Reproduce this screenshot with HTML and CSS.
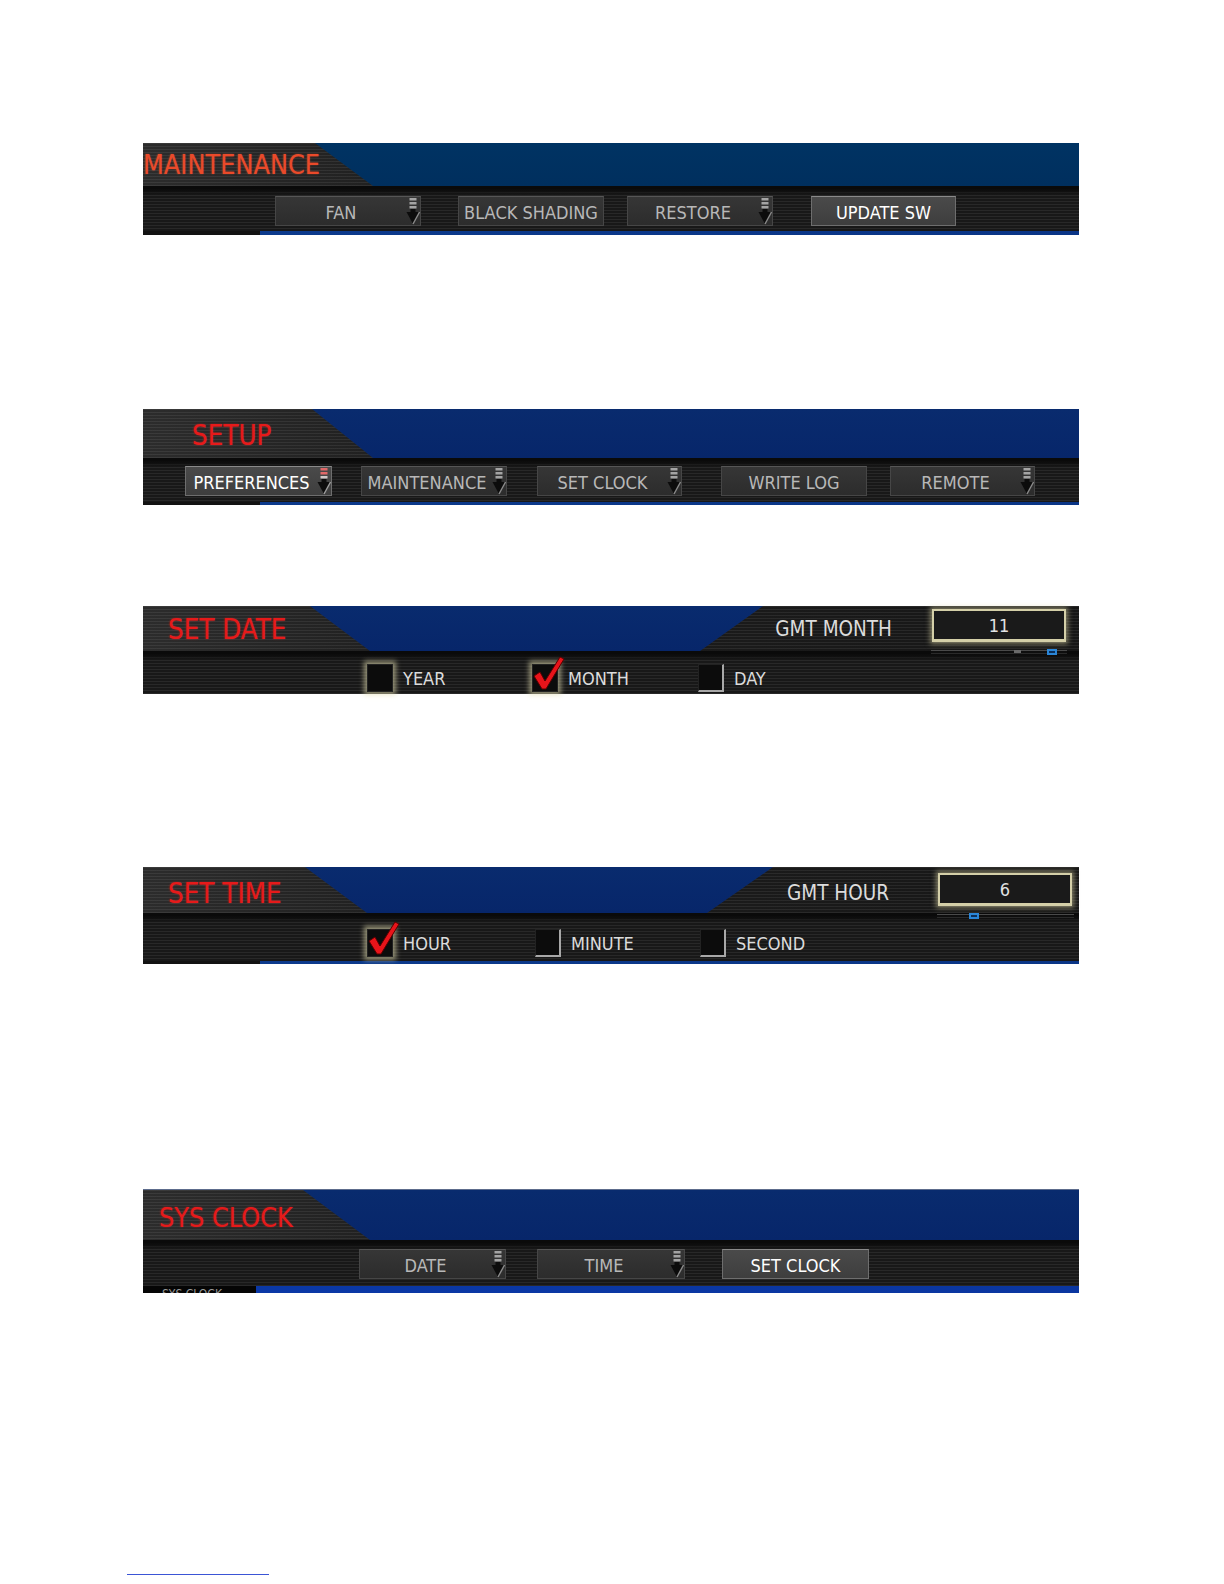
FILE: index.html
```html
<!DOCTYPE html>
<html lang="en">
<head>
<meta charset="utf-8">
<title>Camera menu panels</title>
<link rel="stylesheet" href="styles.css">
</head>
<body>
<main class="page">

  <section class="panel p1">
    <div class="head">
      <div class="title t-orange">MAINTENANCE</div>
    </div>
    <div class="bar">
      <div class="btn g1-a"><span class="lbl">FAN</span><svg class="ind" viewBox="0 0 14 28" width="14" height="28"><rect x="3.5" y="1" width="7" height="2.5" fill="#a4a4a4"/><rect x="3.5" y="5" width="7" height="2.5" fill="#a4a4a4"/><rect x="3.5" y="9" width="7" height="2.5" fill="#a4a4a4"/><rect x="4.5" y="12" width="5" height="3" fill="#0c0c0c"/><path d="M0.5 15 L13.5 15 L7 27 Z" fill="#0c0c0c"/><path d="M13.5 15 L7 27" stroke="#8c8c8c" stroke-width="1.4"/></svg></div>
      <div class="btn g1-b"><span class="lbl">BLACK SHADING</span></div>
      <div class="btn g1-c"><span class="lbl">RESTORE</span><svg class="ind" viewBox="0 0 14 28" width="14" height="28"><rect x="3.5" y="1" width="7" height="2.5" fill="#a4a4a4"/><rect x="3.5" y="5" width="7" height="2.5" fill="#a4a4a4"/><rect x="3.5" y="9" width="7" height="2.5" fill="#a4a4a4"/><rect x="4.5" y="12" width="5" height="3" fill="#0c0c0c"/><path d="M0.5 15 L13.5 15 L7 27 Z" fill="#0c0c0c"/><path d="M13.5 15 L7 27" stroke="#8c8c8c" stroke-width="1.4"/></svg></div>
      <div class="btn sel g1-d"><span class="lbl">UPDATE SW</span></div>
    </div>
    <div class="foot foot-blue"></div>
  </section>

  <section class="panel p2">
    <div class="head">
      <div class="title">SETUP</div>
    </div>
    <div class="bar">
      <div class="btn sel g2-a"><span class="lbl">PREFERENCES</span><svg class="ind" viewBox="0 0 14 28" width="14" height="28"><rect x="3.5" y="1" width="7" height="2.5" fill="#e06868"/><rect x="3.5" y="5" width="7" height="2.5" fill="#e06868"/><rect x="3.5" y="9" width="7" height="2.5" fill="#d0c8c8"/><rect x="4.5" y="12" width="5" height="3" fill="#0c0c0c"/><path d="M0.5 15 L13.5 15 L7 27 Z" fill="#0c0c0c"/><path d="M13.5 15 L7 27" stroke="#a0a0a0" stroke-width="1.4"/></svg></div>
      <div class="btn g2-b"><span class="lbl">MAINTENANCE</span><svg class="ind" viewBox="0 0 14 28" width="14" height="28"><rect x="3.5" y="1" width="7" height="2.5" fill="#a4a4a4"/><rect x="3.5" y="5" width="7" height="2.5" fill="#a4a4a4"/><rect x="3.5" y="9" width="7" height="2.5" fill="#a4a4a4"/><rect x="4.5" y="12" width="5" height="3" fill="#0c0c0c"/><path d="M0.5 15 L13.5 15 L7 27 Z" fill="#0c0c0c"/><path d="M13.5 15 L7 27" stroke="#8c8c8c" stroke-width="1.4"/></svg></div>
      <div class="btn g2-c"><span class="lbl">SET CLOCK</span><svg class="ind" viewBox="0 0 14 28" width="14" height="28"><rect x="3.5" y="1" width="7" height="2.5" fill="#a4a4a4"/><rect x="3.5" y="5" width="7" height="2.5" fill="#a4a4a4"/><rect x="3.5" y="9" width="7" height="2.5" fill="#a4a4a4"/><rect x="4.5" y="12" width="5" height="3" fill="#0c0c0c"/><path d="M0.5 15 L13.5 15 L7 27 Z" fill="#0c0c0c"/><path d="M13.5 15 L7 27" stroke="#8c8c8c" stroke-width="1.4"/></svg></div>
      <div class="btn g2-d"><span class="lbl">WRITE LOG</span></div>
      <div class="btn g2-e"><span class="lbl">REMOTE</span><svg class="ind" viewBox="0 0 14 28" width="14" height="28"><rect x="3.5" y="1" width="7" height="2.5" fill="#a4a4a4"/><rect x="3.5" y="5" width="7" height="2.5" fill="#a4a4a4"/><rect x="3.5" y="9" width="7" height="2.5" fill="#a4a4a4"/><rect x="4.5" y="12" width="5" height="3" fill="#0c0c0c"/><path d="M0.5 15 L13.5 15 L7 27 Z" fill="#0c0c0c"/><path d="M13.5 15 L7 27" stroke="#8c8c8c" stroke-width="1.4"/></svg></div>
    </div>
    <div class="foot foot-blue"></div>
  </section>

  <section class="panel p3">
    <div class="head">
      <div class="title">SET DATE</div>
      <div class="readout">
        <div class="rlabel">GMT MONTH</div>
        <div class="rgroup">
          <div class="rbox">11</div>
          <div class="slider"><span class="tick tick-m"></span><span class="knob knob-m"></span></div>
        </div>
      </div>
    </div>
    <div class="bar checks">
      <div class="chk w165"><span class="box glow"></span><span class="clbl">YEAR</span></div>
      <div class="chk w166"><span class="box glow"><svg class="mark" viewBox="0 0 34 36" width="34" height="36"><path d="M3 21 L9 17 L14 26 L29 2 L33 4 L15 34 L11 34 Z" fill="#e8141a" stroke="#5a0000" stroke-width="1"/></svg></span><span class="clbl">MONTH</span></div>
      <div class="chk"><span class="box bevel"></span><span class="clbl">DAY</span></div>
    </div>
  </section>

  <section class="panel p4">
    <div class="head">
      <div class="title">SET TIME</div>
      <div class="readout">
        <div class="rlabel">GMT HOUR</div>
        <div class="rgroup">
          <div class="rbox">6</div>
          <div class="slider"><span class="knob knob-h"></span></div>
        </div>
      </div>
    </div>
    <div class="bar checks">
      <div class="chk w168"><span class="box glow"><svg class="mark" viewBox="0 0 34 36" width="34" height="36"><path d="M3 21 L9 17 L14 26 L29 2 L33 4 L15 34 L11 34 Z" fill="#e8141a" stroke="#5a0000" stroke-width="1"/></svg></span><span class="clbl">HOUR</span></div>
      <div class="chk w165"><span class="box bevel"></span><span class="clbl">MINUTE</span></div>
      <div class="chk"><span class="box bevel"></span><span class="clbl">SECOND</span></div>
    </div>
    <div class="foot foot-blue"></div>
  </section>

  <section class="panel p5">
    <div class="head">
      <div class="title">SYS CLOCK</div>
    </div>
    <div class="bar">
      <div class="btn g5-a"><span class="lbl">DATE</span><svg class="ind" viewBox="0 0 14 28" width="14" height="28"><rect x="3.5" y="1" width="7" height="2.5" fill="#a4a4a4"/><rect x="3.5" y="5" width="7" height="2.5" fill="#a4a4a4"/><rect x="3.5" y="9" width="7" height="2.5" fill="#a4a4a4"/><rect x="4.5" y="12" width="5" height="3" fill="#0c0c0c"/><path d="M0.5 15 L13.5 15 L7 27 Z" fill="#0c0c0c"/><path d="M13.5 15 L7 27" stroke="#8c8c8c" stroke-width="1.4"/></svg></div>
      <div class="btn g5-b"><span class="lbl">TIME</span><svg class="ind" viewBox="0 0 14 28" width="14" height="28"><rect x="3.5" y="1" width="7" height="2.5" fill="#a4a4a4"/><rect x="3.5" y="5" width="7" height="2.5" fill="#a4a4a4"/><rect x="3.5" y="9" width="7" height="2.5" fill="#a4a4a4"/><rect x="4.5" y="12" width="5" height="3" fill="#0c0c0c"/><path d="M0.5 15 L13.5 15 L7 27 Z" fill="#0c0c0c"/><path d="M13.5 15 L7 27" stroke="#8c8c8c" stroke-width="1.4"/></svg></div>
      <div class="btn sel g5-c"><span class="lbl">SET CLOCK</span></div>
    </div>
    <div class="foot foot-sys"><span class="foot-txt">SYS CLOCK</span></div>
  </section>

  <div class="rule"></div>
</main>
</body>
</html>
```

FILE: styles.css
```css
html, body {
  margin: 0;
  padding: 0;
  background: #ffffff;
}

.page {
  padding-top: 143px;
  font-family: "DejaVu Sans Condensed", "DejaVu Sans", sans-serif;
}

.panel {
  margin-left: 143px;
  width: 936px;
  background: #161616;
}

.p2 { margin-top: 174px; }
.p3 { margin-top: 101px; }
.p4 { margin-top: 173px; }
.p5 { margin-top: 225px; border-top: 1px solid #5d6c8c; }

/* ---------- header with blue wedge ---------- */
.head {
  position: relative;
  display: flex;
  align-items: flex-start;
  background:
    repeating-linear-gradient(180deg, rgba(255,255,255,0.07) 0 1px, rgba(0,0,0,0) 1px 3px),
    linear-gradient(90deg, #2c2c2c 0%, #1e1e1e 30%, #161616 100%);
}

.head::before {
  content: "";
  position: absolute;
  inset: 0;
  background: linear-gradient(180deg, #092b6e 0%, #07266a 100%);
  clip-path: polygon(169px 0, 100% 0, 100% 100%, 230px 100%);
}

.p1 .head { height: 43px; }
.p1 .head::before {
  background: linear-gradient(180deg, #003363 0%, #002f5e 100%);
  clip-path: polygon(172px 0, 100% 0, 100% 100%, 230px 100%);
}
.p2 .head { height: 49px; }
.p3 .head { height: 45px; }
.p3 .head::before { clip-path: polygon(167px 0, 620px 0, 557px 100%, 227px 100%); }
.p4 .head { height: 46px; }
.p4 .head::before { clip-path: polygon(162px 0, 630px 0, 564px 100%, 224px 100%); }
.p5 .head { height: 50px; }
.p5 .head::before { clip-path: polygon(160px 0, 100% 0, 100% 100%, 227px 100%); }

.title {
  position: relative;
  z-index: 1;
  font-size: 27.5px;
  line-height: 30px;
  color: #e61a1a;
  text-shadow: 0 0 2px rgba(255, 40, 40, 0.45);
  white-space: nowrap;
}
.t-orange { color: #ea4a2a; text-shadow: 0 0 2px rgba(255, 90, 50, 0.45); }

.p1 .title { margin: 7px 0 0 0; font-size: 26.8px; }
.p2 .title { margin: 11px 0 0 49px; }
.p3 .title { margin: 8px 0 0 25px; }
.p4 .title { margin: 11px 0 0 25px; }
.p5 .title { margin: 13px 0 0 16px; font-size: 26.8px; }

/* ---------- readout (right side of header) ---------- */
.readout {
  position: relative;
  z-index: 1;
  margin-left: auto;
  display: flex;
  align-items: flex-start;
}
.rlabel {
  margin-top: 5px;
  font-size: 20.5px;
  line-height: 30px;
  color: #dcdcdc;
  white-space: nowrap;
}
.rgroup {
  display: flex;
  flex-direction: column;
  gap: 8px;
}
.rbox {
  box-sizing: border-box;
  width: 134px;
  height: 33px;
  border: 2px solid #d4cfa8;
  border-bottom-width: 3px;
  box-shadow: 0 0 5px 2px rgba(214, 208, 160, 0.55);
  background: #1a1a1a;
  color: #e2e2e2;
  font-size: 18px;
  line-height: 29px;
  text-align: center;
}
.slider {
  position: relative;
  width: 136px;
  height: 2px;
  margin-left: -1px;
  background: #0e0e0e;
  border-top: 1px solid #4a4a4a;
  border-bottom: 1px solid #2a2a2a;
}
.knob {
  position: absolute;
  top: -2px;
  width: 6px;
  height: 2px;
  border: 2px solid #2a86d8;
  background: #0b2f5a;
}
.knob-m { left: 116px; }
.knob-h { left: 32px; }
.tick {
  position: absolute;
  top: -1px;
  width: 7px;
  height: 3px;
  background: #6a6a6a;
}
.tick-m { left: 83px; }

.p3 .readout { margin-top: 3px; margin-right: 12px; }
.p3 .rlabel { margin-right: 40px; }
.p4 .readout { margin-top: 6px; margin-right: 5px; }
.p4 .rlabel { margin-right: 49px; }
.p4 .slider { width: 137px; }

/* ---------- button bar ---------- */
.bar {
  display: flex;
  align-items: flex-start;
  box-sizing: border-box;
  background:
    linear-gradient(180deg, #0a0a0a 0, #0a0a0a 3px, rgba(10,10,10,0) 9px),
    repeating-linear-gradient(180deg, #282828 0 1px, #181818 1px 3px),
    #181818;
}
.p1 .bar { height: 45px; padding: 10px 0 0 132px; }
.p2 .bar { height: 44px; padding: 8px 0 0 42px; }
.p3 .bar { height: 43px; padding: 13px 0 0 224px; }
.p4 .bar { height: 48px; padding: 16px 0 0 224px; }
.p5 .bar { height: 46px; padding: 9px 0 0 216px; }

.btn {
  box-sizing: border-box;
  flex: none;
  width: 146px;
  height: 30px;
  display: flex;
  align-items: center;
  background: linear-gradient(180deg, #363636 0%, #2c2c2c 100%);
  border: 1px solid #464646;
  border-top-color: #565656;
  color: #b8b8b8;
  font-size: 18px;
}
.btn .lbl {
  flex: 1;
  padding-top: 4px;
  text-align: center;
  white-space: nowrap;
  line-height: 1;
}
.btn .ind {
  flex: none;
  margin-right: 0;
}
.btn.sel {
  background: linear-gradient(180deg, #4a4a4a 0%, #3e3e3e 100%);
  border-color: #6e6e6e;
  border-top-color: #8a8a8a;
  color: #ffffff;
}

.g1-b { margin-left: 37px; }
.g1-c { margin-left: 23px; }
.g1-d { margin-left: 38px; width: 145px; }

.g2-a { width: 147px; }
.g2-b { margin-left: 29px; }
.g2-c { margin-left: 30px; width: 145px; }
.g2-d { margin-left: 39px; }
.g2-e { margin-left: 23px; width: 145px; }

.g5-a { width: 147px; }
.g5-b { margin-left: 31px; width: 148px; }
.g5-c { margin-left: 37px; width: 147px; }

/* ---------- checkboxes ---------- */
.chk {
  flex: none;
  display: flex;
  align-items: center;
}
.w165 { width: 165px; }
.w166 { width: 166px; }
.w168 { width: 168px; }

.box {
  position: relative;
  flex: none;
  box-sizing: border-box;
  width: 26px;
  height: 28px;
  background: #0c0c0c;
  border: 1px solid #222;
}
.box.glow {
  box-shadow: 0 0 5px 3px rgba(225, 220, 175, 0.6);
}
.box.bevel {
  border-right: 2px solid #a8a8a8;
  border-bottom: 2px solid #a8a8a8;
}
.mark {
  position: absolute;
  left: -2px;
  top: -10px;
}
.clbl {
  margin-left: 10px;
  font-size: 18px;
  color: #dcdcdc;
  white-space: nowrap;
}

/* ---------- footers ---------- */
.foot { height: 3px; }
.p1 .foot { height: 4px; }
.foot-blue {
  background: linear-gradient(90deg, #121212 0, #121212 117px, #0c3a8c 117px, #0a3586 100%);
}
.foot-sys {
  height: 7px;
  overflow: hidden;
  background: linear-gradient(90deg, #050505 0, #050505 113px, #0a38a6 113px, #0a36a0 100%);
}
.foot-txt {
  display: block;
  margin: 1px 0 0 19px;
  font-size: 12px;
  line-height: 14px;
  color: #9a9a9a;
}

.rule {
  margin: 281px 0 0 127px;
  width: 142px;
  height: 1px;
  background: #3b55d6;
}
```
